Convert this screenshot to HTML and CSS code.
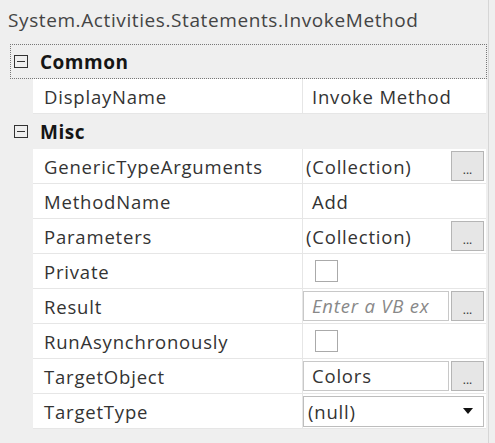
FILE: index.html
```html
<!DOCTYPE html>
<html lang="en">

<head>
    <meta charset="UTF-8">
    <title>Properties - InvokeMethod</title>
    <link rel="stylesheet" href="styles.css">
</head>

<body>

    <div class="grid">
        <div class="title">System.Activities.Statements.InvokeMethod</div>

        <div class="category focused"><span class="toggle"></span>Common</div>
        <div class="prop">
            <div class="name">DisplayName</div>
            <div class="value"><span class="text">Invoke Method</span></div>
        </div>

        <div class="category"><span class="toggle"></span>Misc</div>
        <div class="prop">
            <div class="name">GenericTypeArguments</div>
            <div class="value"><span class="text coll">(Collection)</span><button class="dots">...</button></div>
        </div>
        <div class="prop">
            <div class="name">MethodName</div>
            <div class="value"><span class="text">Add</span></div>
        </div>
        <div class="prop">
            <div class="name">Parameters</div>
            <div class="value"><span class="text coll">(Collection)</span><button class="dots">...</button></div>
        </div>
        <div class="prop">
            <div class="name">Private</div>
            <div class="value"><span class="check"></span></div>
        </div>
        <div class="prop">
            <div class="name">Result</div>
            <div class="value"><span class="box hint">Enter a VB ex</span><button class="dots">...</button></div>
        </div>
        <div class="prop">
            <div class="name">RunAsynchronously</div>
            <div class="value"><span class="check"></span></div>
        </div>
        <div class="prop">
            <div class="name">TargetObject</div>
            <div class="value"><span class="box">Colors</span><button class="dots">...</button></div>
        </div>
        <div class="prop">
            <div class="name">TargetType</div>
            <div class="value">
                <div class="select">
                    <span>(null)</span>
                    <svg width="10" height="6" viewBox="0 0 10 6"><path d="M0 0 L10 0 L5 6 Z" fill="#111"/></svg>
                </div>
            </div>
        </div>
    </div>

</body>

</html>
```

FILE: styles.css
```css
body {
    margin: 0;
    padding: 0;
    background-color: #efefef;
    font-family: 'Open Sans', 'Noto Sans', sans-serif;
    color: #333;
    width: 495px;
    height: 443px;
    overflow: hidden;
}

.grid {
    width: 488px;
    height: 443px;
    border-right: 1px solid #d6d6d6;
    background-color: #efefef;
}

.title {
    height: 44px;
    line-height: 40px;
    padding-left: 8px;
    font-size: 19px;
    letter-spacing: 0.6px;
    color: #444;
    white-space: nowrap;
}

.category {
    height: 35px;
    display: flex;
    align-items: center;
    font-size: 19px;
    font-weight: bold;
    letter-spacing: 0.5px;
    color: #151515;
    box-sizing: border-box;
}

.category.focused {
    margin-left: 10px;
    border: 1px dotted #777;
    margin-right: 1px;
}

.category.focused .toggle {
    margin-left: 3px;
}

.toggle {
    width: 12px;
    height: 11px;
    border: 1px solid #333;
    margin-left: 14px;
    margin-right: 12px;
    position: relative;
    flex-shrink: 0;
}

.toggle::after {
    content: '';
    position: absolute;
    left: 2px;
    right: 2px;
    top: 5px;
    height: 1px;
    background-color: #333;
}

.prop {
    height: 35px;
    margin-left: 33px;
    margin-right: 2px;
    display: flex;
    background-color: #fff;
    border-bottom: 1px solid #e6e6e6;
    box-sizing: border-box;
    font-size: 18.5px;
    letter-spacing: 0.8px;
    white-space: nowrap;
}

.name {
    width: 270px;
    padding-left: 11px;
    display: flex;
    align-items: center;
    box-sizing: border-box;
    border-right: 1px solid #e6e6e6;
}

.value {
    flex: 1;
    display: flex;
    align-items: center;
    gap: 2px;
    padding-right: 2px;
    overflow: hidden;
}

.text {
    flex: 1;
    padding-left: 9px;
}

.text.coll {
    padding-left: 3px;
}

.box {
    flex: 1;
    height: 30px;
    line-height: 28px;
    border: 1px solid #c8c8c8;
    box-sizing: border-box;
    padding-left: 8px;
    overflow: hidden;
}

.hint {
    font-style: italic;
    color: #888;
}

.dots {
    width: 33px;
    height: 30px;
    flex-shrink: 0;
    background-color: #e6e6e6;
    border: 1px solid #b5b5b5;
    font-family: 'Open Sans', sans-serif;
    font-size: 12px;
    color: #333;
    padding: 8px 0 0 0;
    line-height: 12px;
    letter-spacing: 0;
}

.check {
    width: 23px;
    height: 22px;
    margin-left: 12px;
    border: 1px solid #aaa;
    box-sizing: border-box;
    background-color: #fff;
}

.select {
    flex: 1;
    height: 31px;
    border: 1px solid #bdbdbd;
    box-sizing: border-box;
    display: flex;
    align-items: center;
    justify-content: space-between;
    padding: 0 10px 0 4px;
}
```
